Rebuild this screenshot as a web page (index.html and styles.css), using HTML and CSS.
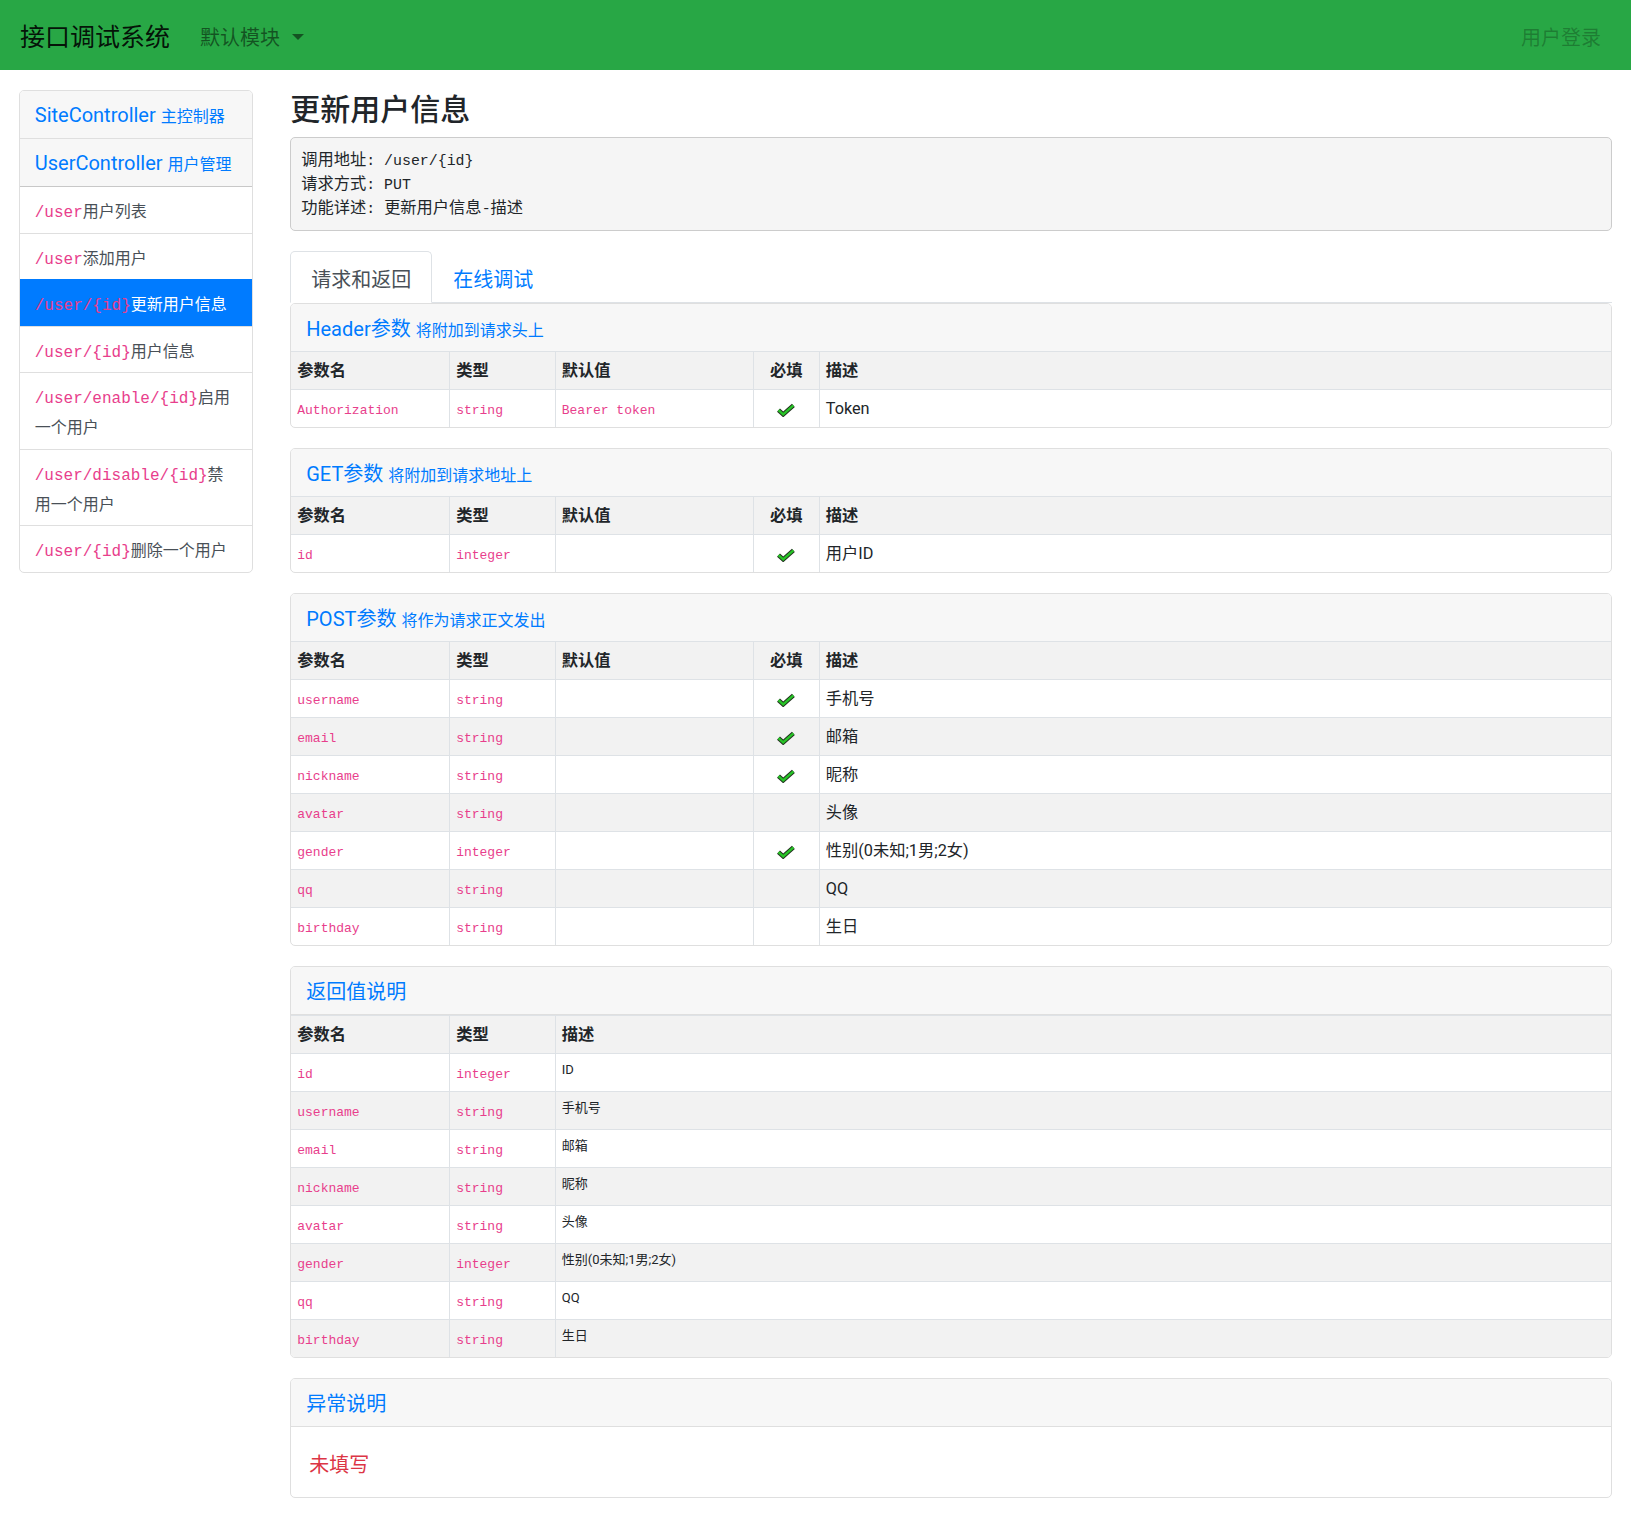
FILE: index.html
```html
<!DOCTYPE html>
<html lang="zh-CN">
<head>
<meta charset="utf-8">
<title>接口调试系统</title>
<link rel="stylesheet" href="styles.css">
</head>
<body>
<nav class="navbar">
  <a class="brand" href="#">接口调试系统</a>
  <a class="nav-item" href="#">默认模块<span class="caret"></span></a>
  <a class="nav-item login" href="#">用户登录</a>
</nav>

<div class="page">
  <aside class="sidebar">
    <a class="sb-item sb-head" href="#">SiteController <small>主控制器</small></a>
    <a class="sb-item sb-head" href="#">UserController <small>用户管理</small></a>
    <a class="sb-item" href="#"><code>/user</code>用户列表</a>
    <a class="sb-item" href="#"><code>/user</code>添加用户</a>
    <a class="sb-item active" href="#"><code>/user/{id}</code>更新用户信息</a>
    <a class="sb-item" href="#"><code>/user/{id}</code>用户信息</a>
    <a class="sb-item" href="#"><code>/user/enable/{id}</code><span>启用</span><span>一个用户</span></a>
    <a class="sb-item" href="#"><code>/user/disable/{id}</code><span>禁</span><span>用一个用户</span></a>
    <a class="sb-item" href="#"><code>/user/{id}</code>删除一个用户</a>
  </aside>

  <main class="main">
    <h4 class="title">更新用户信息</h4>
    <div class="info">
      <div>调用地址<span class="m">: /user/{id}</span></div>
      <div>请求方式<span class="m">: PUT</span></div>
      <div>功能详述<span class="m">: </span>更新用户信息<span class="m">-</span>描述</div>
    </div>

    <div class="tabs">
      <a class="tab active" href="#">请求和返回</a>
      <a class="tab" href="#">在线调试</a>
    </div>

    <section class="card">
      <div class="card-header">Header参数 <small>将附加到请求头上</small></div>
      <table class="tbl">
        <colgroup><col class="w1"><col class="w2"><col class="w3"><col class="w4"><col></colgroup>
        <tr><th>参数名</th><th>类型</th><th>默认值</th><th class="c">必填</th><th>描述</th></tr>
        <tr><td><code>Authorization</code></td><td><code>string</code></td><td><code>Bearer token</code></td><td class="c"><svg class="ok" width="20" height="14" viewBox="0 0 20 14"><path d="M2.5 7.2 L7.2 11.4 L17.4 2.4" fill="none" stroke="#23331f" stroke-width="4.4"/><path d="M2.5 7.2 L7.2 11.4 L17.4 2.4" fill="none" stroke="#27c427" stroke-width="2.4"/></svg></td><td>Token</td></tr>
      </table>
    </section>

    <section class="card">
      <div class="card-header">GET参数 <small>将附加到请求地址上</small></div>
      <table class="tbl">
        <colgroup><col class="w1"><col class="w2"><col class="w3"><col class="w4"><col></colgroup>
        <tr><th>参数名</th><th>类型</th><th>默认值</th><th class="c">必填</th><th>描述</th></tr>
        <tr><td><code>id</code></td><td><code>integer</code></td><td></td><td class="c"><svg class="ok" width="20" height="14" viewBox="0 0 20 14"><path d="M2.5 7.2 L7.2 11.4 L17.4 2.4" fill="none" stroke="#23331f" stroke-width="4.4"/><path d="M2.5 7.2 L7.2 11.4 L17.4 2.4" fill="none" stroke="#27c427" stroke-width="2.4"/></svg></td><td>用户ID</td></tr>
      </table>
    </section>

    <section class="card">
      <div class="card-header">POST参数 <small>将作为请求正文发出</small></div>
      <table class="tbl">
        <colgroup><col class="w1"><col class="w2"><col class="w3"><col class="w4"><col></colgroup>
        <tr><th>参数名</th><th>类型</th><th>默认值</th><th class="c">必填</th><th>描述</th></tr>
        <tr><td><code>username</code></td><td><code>string</code></td><td></td><td class="c"><svg class="ok" width="20" height="14" viewBox="0 0 20 14"><path d="M2.5 7.2 L7.2 11.4 L17.4 2.4" fill="none" stroke="#23331f" stroke-width="4.4"/><path d="M2.5 7.2 L7.2 11.4 L17.4 2.4" fill="none" stroke="#27c427" stroke-width="2.4"/></svg></td><td>手机号</td></tr>
        <tr><td><code>email</code></td><td><code>string</code></td><td></td><td class="c"><svg class="ok" width="20" height="14" viewBox="0 0 20 14"><path d="M2.5 7.2 L7.2 11.4 L17.4 2.4" fill="none" stroke="#23331f" stroke-width="4.4"/><path d="M2.5 7.2 L7.2 11.4 L17.4 2.4" fill="none" stroke="#27c427" stroke-width="2.4"/></svg></td><td>邮箱</td></tr>
        <tr><td><code>nickname</code></td><td><code>string</code></td><td></td><td class="c"><svg class="ok" width="20" height="14" viewBox="0 0 20 14"><path d="M2.5 7.2 L7.2 11.4 L17.4 2.4" fill="none" stroke="#23331f" stroke-width="4.4"/><path d="M2.5 7.2 L7.2 11.4 L17.4 2.4" fill="none" stroke="#27c427" stroke-width="2.4"/></svg></td><td>昵称</td></tr>
        <tr><td><code>avatar</code></td><td><code>string</code></td><td></td><td class="c"></td><td>头像</td></tr>
        <tr><td><code>gender</code></td><td><code>integer</code></td><td></td><td class="c"><svg class="ok" width="20" height="14" viewBox="0 0 20 14"><path d="M2.5 7.2 L7.2 11.4 L17.4 2.4" fill="none" stroke="#23331f" stroke-width="4.4"/><path d="M2.5 7.2 L7.2 11.4 L17.4 2.4" fill="none" stroke="#27c427" stroke-width="2.4"/></svg></td><td>性别(0未知;1男;2女)</td></tr>
        <tr><td><code>qq</code></td><td><code>string</code></td><td></td><td class="c"></td><td>QQ</td></tr>
        <tr><td><code>birthday</code></td><td><code>string</code></td><td></td><td class="c"></td><td>生日</td></tr>
      </table>
    </section>

    <section class="card">
      <div class="card-header bb">返回值说明</div>
      <table class="tbl">
        <colgroup><col class="w1"><col class="w2"><col></colgroup>
        <tr><th>参数名</th><th>类型</th><th>描述</th></tr>
        <tr><td><code>id</code></td><td><code>integer</code></td><td class="sm">ID</td></tr>
        <tr><td><code>username</code></td><td><code>string</code></td><td class="sm">手机号</td></tr>
        <tr><td><code>email</code></td><td><code>string</code></td><td class="sm">邮箱</td></tr>
        <tr><td><code>nickname</code></td><td><code>string</code></td><td class="sm">昵称</td></tr>
        <tr><td><code>avatar</code></td><td><code>string</code></td><td class="sm">头像</td></tr>
        <tr><td><code>gender</code></td><td><code>integer</code></td><td class="sm">性别(0未知;1男;2女)</td></tr>
        <tr><td><code>qq</code></td><td><code>string</code></td><td class="sm">QQ</td></tr>
        <tr><td><code>birthday</code></td><td><code>string</code></td><td class="sm">生日</td></tr>
      </table>
    </section>

    <section class="card">
      <div class="card-header bb">异常说明</div>
      <div class="card-body">未填写</div>
    </section>
  </main>
</div>
</body>
</html>
```

FILE: styles.css
```css
* { box-sizing: border-box; }

body {
  margin: 0;
  font-family: "Segoe UI", Roboto, "Noto Sans CJK SC", sans-serif;
  font-size: 20px;
  line-height: 1.5;
  color: #212529;
  background: #fff;
}

a { text-decoration: none; }

/* navbar */
.navbar {
  display: flex;
  align-items: center;
  height: 70px;
  padding: 13px 20px 7px;
  background: #28a745;
}
.brand {
  font-size: 25px;
  line-height: 37.5px;
  margin-right: 20px;
  color: rgba(0, 0, 0, .9);
}
.nav-item {
  padding: 10px;
  line-height: 30px;
  color: rgba(0, 0, 0, .5);
}
.caret {
  display: inline-block;
  margin-left: 12px;
  vertical-align: 5px;
  border-top: 6px solid;
  border-left: 6px solid transparent;
  border-right: 6px solid transparent;
}
.login {
  margin-left: auto;
  color: rgba(0, 0, 0, .25);
}

/* page layout */
.page {
  display: grid;
  grid-template-columns: 234px 1fr;
  column-gap: 37.5px;
  padding: 20px 18.75px;
}
.main { min-width: 0; }

/* sidebar */
.sidebar {
  align-self: start;
  border: 1px solid #dfdfdf;
  border-radius: 5px;
  overflow: hidden;
}
.sb-item {
  display: block;
  padding: 10px 15px 5.5px;
  line-height: 30px;
  font-size: 16px;
  color: #495057;
  border-top: 1px solid #dfdfdf;
}
.sb-item:first-child { border-top: 0; }
.sb-item code {
  font-family: "Liberation Mono", monospace;
  font-size: 16px;
  line-height: 1;
  color: #e83e8c;
}
.sb-head {
  padding: 8.5px 15px;
  font-size: 20px;
  color: #007bff;
  background: #f7f7f7;
}
.sb-head small { font-size: 16px; line-height: 1; }
.sb-head + .sb-item:not(.sb-head) { border-top-color: #c8c8c8; }
.sb-item.active {
  background: #007bff;
  border-top-color: #007bff;
  color: #fff;
}

/* title + info */
.title {
  margin: 0 0 9px;
  padding-top: 2px;
  font-size: 30px;
  font-weight: 500;
  line-height: 36px;
}
.info {
  margin: 0 0 20px;
  padding: 11px 10px 9px;
  background: #f5f5f5;
  border: 1px solid #ccc;
  border-radius: 5px;
  font-family: "Liberation Mono", "Noto Sans CJK SC", monospace;
  font-size: 16.25px;
  line-height: 24px;
  color: #212529;
}
.info .m { font-size: 14.9px; line-height: 1; white-space: pre; }

/* tabs */
.tabs {
  display: flex;
  border-bottom: 1px solid #dee2e6;
}
.tab {
  padding: 13px 20px 7px;
  line-height: 30px;
  border: 1px solid transparent;
  border-radius: 5px 5px 0 0;
  margin-bottom: -1px;
  color: #007bff;
}
.tab.active {
  color: #495057;
  background: #fff;
  border-color: #dee2e6 #dee2e6 #fff;
}

/* cards */
.card {
  border: 1px solid #dfdfdf;
  border-radius: 5px;
  margin-bottom: 20px;
  overflow: hidden;
}
.card-header {
  padding: 10px 15px 7px;
  line-height: 30px;
  font-size: 20px;
  color: #007bff;
  background: #f7f7f7;
}
.card-header small { font-size: 16px; line-height: 1; }
.card-header.bb { border-bottom: 1px solid #dfdfdf; }
.card-body {
  padding: 23px 18px 17px;
  line-height: 30px;
  color: #dc3545;
}

/* tables */
.tbl {
  width: 100%;
  border-collapse: collapse;
  table-layout: fixed;
  font-size: 16.25px;
  line-height: 25px;
}
.tbl .w1 { width: 12%; }
.tbl .w2 { width: 8%; }
.tbl .w3 { width: 15%; }
.tbl .w4 { width: 5%; }
.tbl th, .tbl td {
  border: 1px solid #dee2e6;
  padding: 6px;
  text-align: left;
  vertical-align: middle;
}
.tbl tr > :first-child { border-left: 0; }
.tbl tr > :last-child { border-right: 0; }
.tbl tr:last-child > * { border-bottom: 0; }
.tbl tr:nth-child(odd) { background: #f2f2f2; }
.tbl th { font-weight: 700; }
.tbl .c { text-align: center; }
.tbl code {
  font-family: "Liberation Mono", monospace;
  font-size: 13px;
  line-height: 1;
  color: #e83e8c;
}
.tbl td.sm {
  font-size: 13px;
  line-height: 19.5px;
  vertical-align: top;
}
.ok { display: inline-block; vertical-align: middle; }
```
